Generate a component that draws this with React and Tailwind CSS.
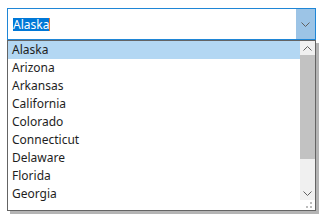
import React from "react";

const states = [
  "Alaska",
  "Arizona",
  "Arkansas",
  "California",
  "Colorado",
  "Connecticut",
  "Delaware",
  "Florida",
  "Georgia",
];

function Chevron({ up }) {
  return (
    <svg width="9" height="5" viewBox="0 0 9 5" className="block">
      <path
        d={up ? "M0.5 4.5 L4.5 0.5 L8.5 4.5" : "M0.5 0.5 L4.5 4.5 L8.5 0.5"}
        fill="none"
        stroke="#606060"
        strokeWidth="1"
      />
    </svg>
  );
}

export default function App() {
  const selected = "Alaska";

  return (
    <div
      className="w-[325px] h-[221px] bg-white pt-2 pl-[7px] overflow-hidden text-[12px] text-[#1e1e1e]"
      style={{ fontFamily: '"Noto Sans", sans-serif' }}
    >
      {/* combo input */}
      <div className="w-[309px] h-[32px] border border-[#1f86d6] flex">
        <div className="flex-1 flex items-center pl-[5px]">
          <span className="bg-[#0078d7] text-white leading-[13px] px-0">
            {selected}
          </span>
          <span className="w-px h-[13px] bg-[#e07b39]" />
        </div>
        <div className="w-[19px] bg-[#9cc4e6] flex items-center justify-center">
          <Chevron />
        </div>
      </div>

      {/* dropdown list */}
      <div className="w-[309px] h-[171px] border border-[#646464] bg-white flex shadow-[3px_3px_0_#b4b4b4]">
        <ul className="flex-1">
          {states.map((s) => (
            <li
              key={s}
              className={`h-[18px] leading-[18px] pl-[4px] ${
                s === selected ? "bg-[#b3d7f3]" : ""
              }`}
            >
              {s}
            </li>
          ))}
        </ul>

        {/* scrollbar */}
        <div className="w-[15px] flex flex-col bg-[#f0f0f0]">
          <div className="h-[14px] flex items-center justify-center">
            <Chevron up />
          </div>
          <div className="h-[104px] bg-[#c2c2c2]" />
          <div className="flex-1" />
          <div className="h-[14px] flex items-center justify-center">
            <Chevron />
          </div>
          <div className="h-[10px] bg-white relative">
            <span className="absolute right-[3px] top-[2px] w-[2px] h-[2px] bg-[#bcbcbc]" />
            <span className="absolute right-[3px] top-[6px] w-[2px] h-[2px] bg-[#bcbcbc]" />
            <span className="absolute right-[7px] top-[6px] w-[2px] h-[2px] bg-[#bcbcbc]" />
          </div>
        </div>
      </div>
    </div>
  );
}
